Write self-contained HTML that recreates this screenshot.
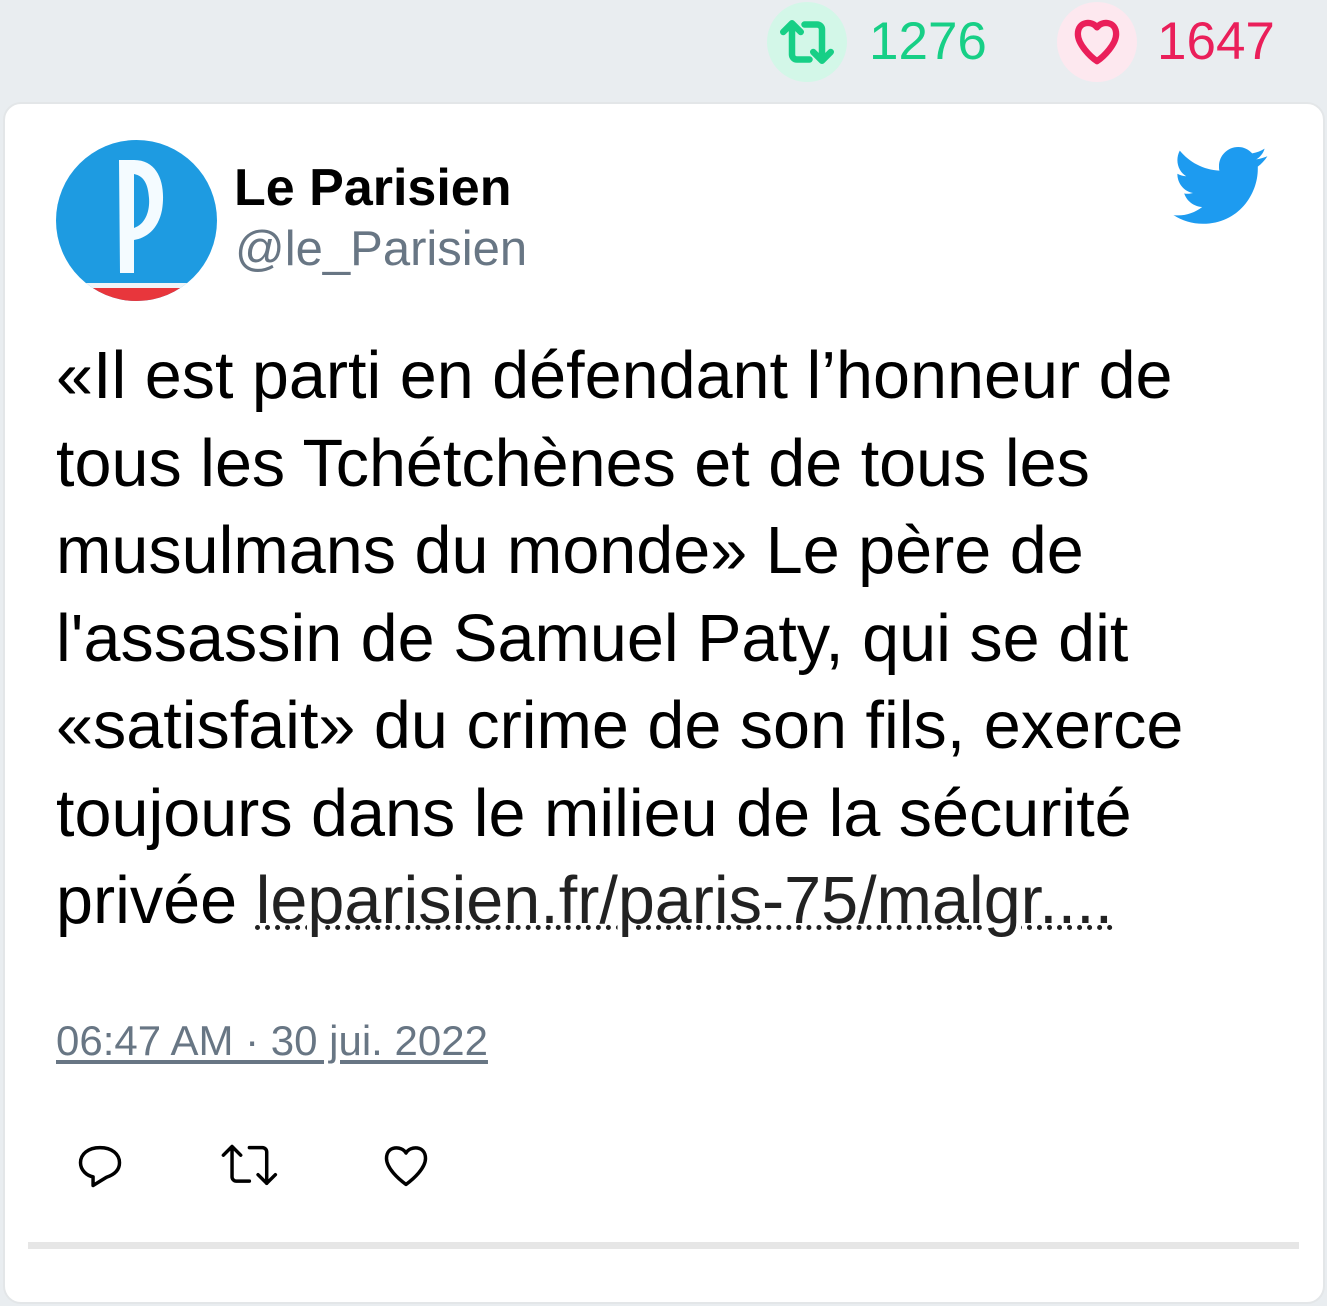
<!DOCTYPE html>
<html><head><meta charset="utf-8"><style>
html,body{margin:0;padding:0;}
body{width:1327px;height:1306px;background:#e9edf0;position:relative;overflow:hidden;font-family:"Liberation Sans",Arial,sans-serif;}
.stat{position:absolute;top:0;height:83px;display:flex;align-items:center;}
.circ{width:80px;height:80px;border-radius:50%;display:flex;align-items:center;justify-content:center;}
.num{font-size:53px;margin-left:22px;}
.card{position:absolute;left:3px;top:102px;width:1318px;height:1198px;background:#fff;border:2px solid #e3e6e8;border-radius:18px;}
.name{position:absolute;left:234px;top:158px;font-size:52px;font-weight:bold;color:#000;}
.handle{position:absolute;left:235px;top:221px;font-size:49px;color:#687684;}
.text{position:absolute;left:56px;top:333px;width:1230px;font-size:66.5px;line-height:87.5px;color:#000;}
.link{color:#222;text-decoration:underline dotted;text-decoration-thickness:5px;text-underline-offset:2px;}
.time{position:absolute;left:56px;top:1017px;font-size:42px;color:#687684;text-decoration:underline;text-underline-offset:5px;}
.sep{position:absolute;left:28px;top:1242px;width:1271px;height:7px;background:#e6e6e6;}
</style></head><body>
<div class="stat" style="left:767px;">
 <div class="circ" style="background:#d3f7e8;">
  <svg width="60" height="60" viewBox="0 0 24 24" fill="none" stroke="#17cf86" stroke-width="2.6" stroke-linecap="round" stroke-linejoin="round"><path d="M2.5 8 L6 4.5 L9.5 8 M6 5 V17 a2 2 0 0 0 2 2 H13"/><path d="M11 5 H16 a2 2 0 0 1 2 2 V19 M14.5 16 L18 19.5 L21.5 16"/></svg>
 </div><span class="num" style="color:#17cf86;">1276</span></div>
<div class="stat" style="left:1057px;">
 <div class="circ" style="background:#fde8ef;">
  <svg width="54" height="54" viewBox="0 0 24 24" fill="none" stroke="#ea1f5a" stroke-width="2.8" stroke-linejoin="round"><path d="M12 5.5 C10 2.5 3.5 2.5 3.5 8.5 C3.5 13 9 18.5 12 20.5 C15 18.5 20.5 13 20.5 8.5 C20.5 2.5 14 2.5 12 5.5 Z"/></svg>
 </div><span class="num" style="color:#ea1f5a;margin-left:20px;">1647</span></div>

<div class="card"></div>
<svg style="position:absolute;left:56px;top:140px" width="161" height="161" viewBox="0 0 161 161">
 <defs><clipPath id="c"><circle cx="80.5" cy="80.5" r="80.5"/></clipPath></defs>
 <g clip-path="url(#c)">
  <rect width="161" height="161" fill="#1e9be1"/>
  <rect x="0" y="143" width="161" height="5" fill="#f0f4f8"/>
  <rect x="0" y="148" width="161" height="13" fill="#e8363c"/>
  <path d="M63 20 H78 C103 20 110 45 106 70 C102 90 90 98 78 100 V133 H64 Z M78 34 V88 C90 84 94 70 93 58 C92 44 88 36 78 34 Z" fill="#f4fbff" fill-rule="evenodd"/>
 </g>
</svg>
<div class="name">Le Parisien</div>
<div class="handle">@le_Parisien</div>
<svg style="position:absolute;left:1173px;top:145px" width="96" height="82" viewBox="0 0 24 19.5"><path fill="#1d9bf0" d="M23.6 2.3c-.9.4-1.8.6-2.8.8 1-.6 1.8-1.6 2.1-2.7-.9.6-2 1-3.1 1.2C18.9.6 17.7 0 16.3 0c-2.7 0-4.8 2.2-4.8 4.8 0 .4 0 .8.1 1.1C7.6 5.7 4.1 3.8 1.7.9c-.4.7-.6 1.6-.6 2.4 0 1.7.9 3.2 2.2 4-.8 0-1.5-.2-2.2-.6v.1c0 2.3 1.7 4.3 3.9 4.7-.4.1-.8.2-1.3.2-.3 0-.6 0-.9-.1.6 1.9 2.4 3.3 4.5 3.4-1.7 1.3-3.8 2.1-6 2.1-.4 0-.8 0-1.2-.1 2.1 1.4 4.7 2.2 7.4 2.2 8.9 0 13.7-7.4 13.7-13.7v-.6c.9-.7 1.7-1.5 2.4-2.6z"/></svg>
<div class="text">«Il est parti en défendant l’honneur de<br>tous les Tchétchènes et de tous les<br>musulmans du monde» Le père de<br>l'assassin de Samuel Paty, qui se dit<br>«satisfait» du crime de son fils, exerce<br>toujours dans le milieu de la sécurité<br>privée <span class="link">leparisien.fr/paris-75/malgr....</span></div>
<div class="time">06:47 AM · 30 jui. 2022</div>
<svg style="position:absolute;left:74px;top:1140px" width="52" height="52" viewBox="0 0 24 24" fill="none" stroke="#000" stroke-width="1.6" stroke-linejoin="round"><path d="M12 3.5 C6.5 3.5 3 6.5 3 10.5 C3 14 6 16.5 8.8 17 V21 L15 17.2 C18.5 16 21 13.8 21 10.5 C21 6.5 17.5 3.5 12 3.5 Z"/></svg>
<svg style="position:absolute;left:219px;top:1140px" width="64" height="52" viewBox="0 0 29.5 24" fill="none" stroke="#000" stroke-width="1.6" stroke-linecap="round" stroke-linejoin="round"><path d="M2 7 L6 3 L10 7 M6 3.5 V17 a2 2 0 0 0 2 2 H14"/><path d="M14 3.5 H20 a2 2 0 0 1 2 2 V20 M18 16 L22 20 L26 16"/></svg>
<svg style="position:absolute;left:380px;top:1140px" width="52" height="52" viewBox="0 0 24 24" fill="none" stroke="#000" stroke-width="1.6" stroke-linejoin="round"><path d="M12 6 C10 2.5 3 2.5 3 8.5 C3 13 8.5 18 12 20.5 C15.5 18 21 13 21 8.5 C21 2.5 14 2.5 12 6 Z"/></svg>
<div class="sep"></div>
</body></html>
